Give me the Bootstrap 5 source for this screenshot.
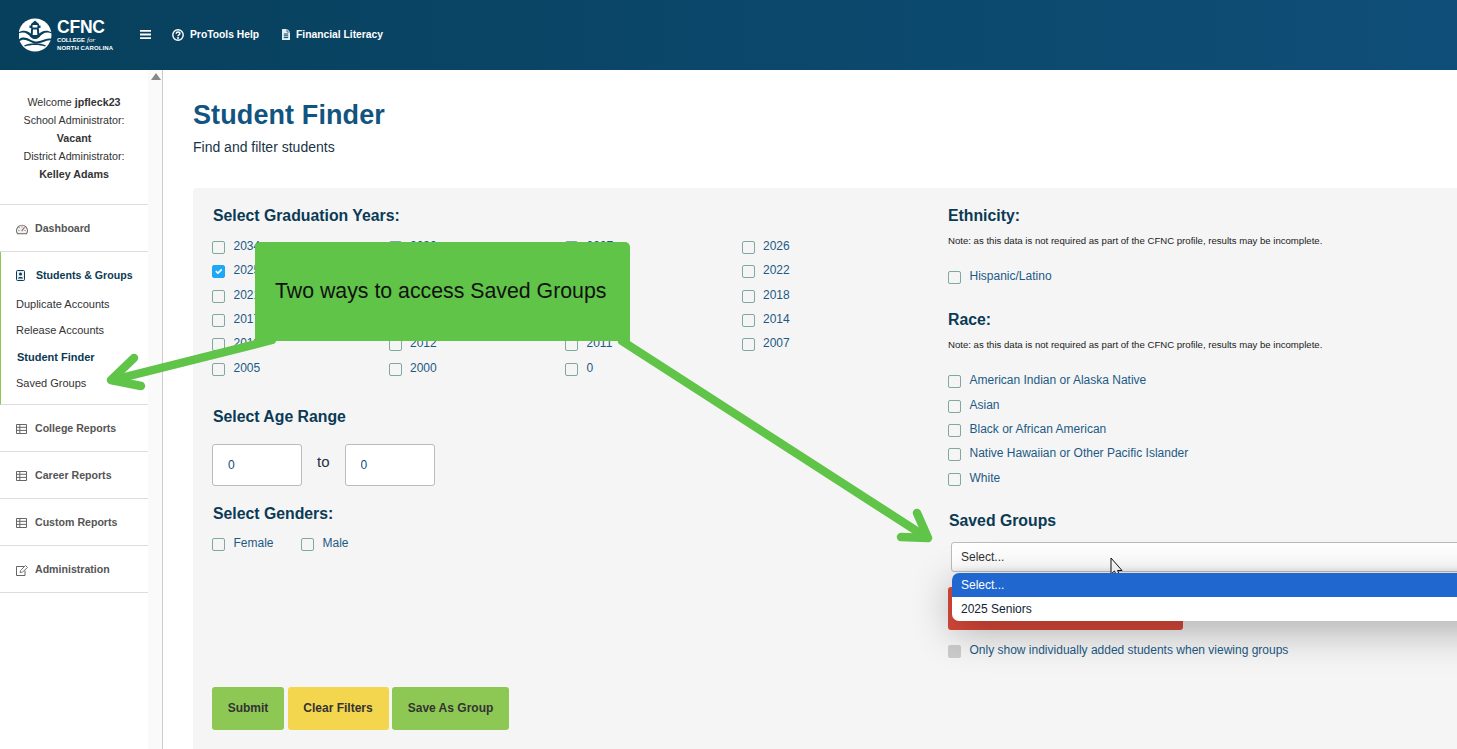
<!DOCTYPE html>
<html lang="en">
<head>
<meta charset="utf-8">
<title>Student Finder</title>
<link href="https://cdn.jsdelivr.net/npm/bootstrap@5.3.0/dist/css/bootstrap.min.css" rel="stylesheet">
<style>
html,body{height:749px;overflow:hidden}
body{font-family:"Liberation Sans",Arial,sans-serif;color:#222;background:#fff;width:1457px;position:relative}
.topbar{height:70px;background:linear-gradient(90deg,#07405c,#0f4e78);padding:0 0 1px 19px}
.brand{width:121px;margin-right:0;margin-top:1px}
.menu-btn{width:11px;margin-right:21px;line-height:0}
.top-link{color:#fff;font-size:10.3px;font-weight:700;text-decoration:none;gap:6px;margin-right:23px;line-height:14px}
.shell{height:679px}
.sidenav{width:163px;border-right:1px solid #ccc;flex:none}
.side-inner{width:148px;flex:none}
.side-scroll{width:14px;background:#fafafa;flex:none;padding:3px 0 0 3px}
.scroll-up{width:0;height:0;border-left:5px solid transparent;border-right:5px solid transparent;border-bottom:7px solid #888}
.welcome{font-size:10.7px;line-height:18px;text-align:center;color:#333;padding:23px 0 0;height:135px;border-bottom:1px solid #ddd}
.welcome b{color:#333}
.side-row{height:47px;border-bottom:1px solid #ddd;padding:2px 0 0 16px;font-size:10.6px;font-weight:700;color:#555;gap:7px;text-decoration:none}
.gap-table{gap:8px}
.side-group{height:153px;border-bottom:1px solid #ddd;border-left:1px solid #8ec854;padding-left:15px}
.side-head{height:45px;font-size:10.6px;font-weight:700;color:#0b3a55;gap:11px;padding-top:2px}
.side-sub{display:block;font-size:11px;color:#333;text-decoration:none;line-height:14px;margin-bottom:12.3px}
.side-sub.here{font-weight:700;color:#0b3a55;padding-left:1px}
.content{flex:1;min-width:0;padding:0 0 0 30px;overflow:hidden}
.page-title{font-size:27px;font-weight:700;color:#125480;line-height:32px;margin:29px 0 0;letter-spacing:.1px}
.page-sub{font-size:14px;color:#1a3446;line-height:18px;margin:7px 0 0}
.panel{background:#f5f5f5;border-radius:4px 0 0 0;margin-top:32px;padding:18px 0 0 19px;width:1400px;height:600px;display:grid;grid-template-columns:736px 1fr}
.sect{font-size:15.8px;font-weight:700;line-height:20px;color:#0b3a55;margin:0}
.sect-l{margin-left:1px}
.sect-age{margin-top:25.800px}
.sect-gen{margin-top:18px}
.year-grid{display:grid;grid-template-columns:repeat(4,176.5px);grid-auto-rows:24.4px;margin-top:8.700px}
.chk{display:flex;align-items:center;gap:8.5px;font-size:12px;color:#1c5a85;margin:0;height:24.4px;line-height:14px}
.chk span{position:relative;top:-1px}
.chk .form-check-input{width:13px;height:13px;margin:1px 0 0 0;border:1px solid #7fa8a0;border-radius:2px;background-color:#f5f5f5;flex:none}
.chk .form-check-input:checked{background-color:#1fa8f5;border-color:#1fa8f5}
.chk .form-check-input:disabled{background-color:#ccc;border-color:#ccc;opacity:1}
.age-row{display:flex;align-items:center;margin-top:17px;gap:15px}
.age-box{width:90px;height:42px;border:1px solid #bbb;border-radius:3px;font-size:12px;color:#144a6e;padding:2px 15px}
.age-to{font-size:15px;color:#1a3446;position:relative;top:-3px}
.gender-row{display:flex;gap:27.5px;margin-top:8px}
.btn-row{display:flex;gap:3.5px;margin-top:131px}
.act-btn{height:43px;font-size:12px;font-weight:700;color:#333;border:0;border-radius:3px;padding:0 0 2px}
.act-green{background:#8ec854}
.act-yellow{background:#f4d64e}
.w-submit{width:72px}
.w-clear{width:101px}
.w-save{width:117px}
.note{font-size:9.6px;line-height:14px;color:#222;margin:8px 0 0}
.note+.chk{margin-top:17px}
.gap-race{margin-top:20.6px}
.gap-saved{margin-top:20px;padding-left:1px}
.select-wrap{position:relative;margin:11px 0 0 3px;width:700px}
.pick{height:30px;font-size:12px;color:#333;padding:0 0 0 9px;border:1px solid #bbb;border-radius:3px;background-color:#fff;box-shadow:inset 0 -6px 6px -6px rgba(0,0,0,.12)}
.pick-menu{top:31px;left:1px;width:100%;padding:0;border:0;border-radius:7px;font-size:12px;margin:0;overflow:hidden;box-shadow:0 10px 40px rgba(0,0,0,.3);min-width:0}
.pick-menu .dropdown-item{height:24px;line-height:24px;padding:0 9px;color:#123}
.pick-menu .dropdown-item.active{background:#2068cf;color:#fff}
.red-block{width:235px;height:43px;background:#dc4a3a;border-radius:3px;margin-top:15px}
.red-block+.chk{margin-top:9px}
.marks{position:absolute;left:0;top:0;width:1457px;height:749px;pointer-events:none}
.callout{position:absolute;left:255px;top:242px;width:375px;height:99px;background:#5fc448;border-radius:5px 5px 0 0;font-size:21.3px;line-height:99px;color:#111;padding-left:20px;white-space:nowrap}
</style>
</head>
<body>
<header class="topbar d-flex align-items-center">
  <div class="brand">
    <svg width="96" height="34" viewBox="0 0 96 34" role="img" aria-label="CFNC College for North Carolina">
      <circle cx="16" cy="17" r="16.500" fill="#fff"/>
      <path d="M-1 14.500C5 11 9 13 13 16.500V19H19V16.500C23 13 27 11 33 14.500V15.500C27 13 23 15.500 20 19.500C17 21.500 15 21.500 12 19.500C9 15.500 5 13 -1 15.500Z" fill="#07405c"/>
      <path d="M-.5 21.500C6 16.500 11 22.500 16 23.500C22 24.500 27 19 32.500 21L32.500 22.500C27 21.500 22 26.500 16 25.500C10 24.500 6 19 0 23.500Z" fill="#07405c"/>
      <path d="M5 27.500C11 24.500 21 24.500 27 27.500L26 28.500C21 26.500 11 26.500 6 28.500Z" fill="#07405c"/>
      <path d="M12 6L16 2.500L20 6V7.500H21.500V10H19.800L20.500 19H11.500L12.200 10H10.500V7.500H12Z" fill="#07405c"/>
      <path d="M13.600 7h4.800v2.500h-4.800zM14 11.500h4L18.300 17H13.700Z" fill="#fff"/>
      <text x="38" y="15.200" font-family="Liberation Sans" font-size="17.500" font-weight="700" fill="#fff" textLength="48">CFNC</text>
      <text x="38" y="23.700" font-family="Liberation Sans" font-size="6" font-weight="700" fill="#fff" textLength="28">COLLEGE</text>
      <text x="68" y="23.700" font-family="Liberation Serif" font-size="7" font-style="italic" fill="#fff">for</text>
      <text x="38" y="31.500" font-family="Liberation Sans" font-size="6" font-weight="700" fill="#fff" textLength="56">NORTH CAROLINA</text>
    </svg>
  </div>
  <div class="menu-btn"><svg width="11" height="9" viewBox="0 0 11 9"><path d="M0 0h11v1.800H0zM0 3.600h11v1.800H0zM0 7.200h11V9H0z" fill="#fff"/></svg></div>
  <a class="top-link d-flex align-items-center" href="#">
    <svg width="12" height="12" viewBox="0 0 12 12"><circle cx="6" cy="6" r="5.200" fill="none" stroke="#fff" stroke-width="1.400"/><path d="M4.200 4.700C4.300 3.600 5 3.100 6 3.100c1.100 0 1.900.6 1.900 1.500 0 1.400-1.900 1.300-1.900 2.600" fill="none" stroke="#fff" stroke-width="1.500"/><circle cx="6" cy="9" r="1" fill="#fff"/></svg>
    ProTools Help</a>
  <a class="top-link d-flex align-items-center" href="#">
    <svg width="8" height="11" viewBox="0 0 8 11"><path d="M0 .5A.5.5 0 0 1 .5 0H5.200L8 2.800V10.500a.5.500 0 0 1-.5.500H.5a.5.500 0 0 1-.5-.5Z" fill="#e6eef2"/><path d="M5 0V3H8" fill="none" stroke="#0a4565" stroke-width=".7"/><path d="M1.800 5h4.400M1.800 6.800h4.400M1.800 8.600h4.400" stroke="#0a4565" stroke-width="1"/></svg>
    Financial Literacy</a>
</header>
<div class="shell d-flex">
  <aside class="sidenav d-flex">
    <nav class="side-inner">
      <div class="welcome">Welcome <b>jpfleck23</b><br>School Administrator:<br><b>Vacant</b><br>District Administrator:<br><b>Kelley Adams</b></div>
      <a class="side-row d-flex align-items-center" href="#">
        <svg width="12" height="11" viewBox="0 0 12 11"><path d="M1.600 9.800A5.400 5.400 0 1 1 10.400 9.800Z" fill="#f2f2f2" stroke="#666" stroke-width="1.100"/><path d="M5.600 7.200L8.500 3.400" stroke="#a65" stroke-width="1.100"/><path d="M2.400 6.500h1M8.600 6.500h1M6 2.400v1M3.400 3.500l.7.700" stroke="#666" stroke-width=".9"/></svg>
        Dashboard</a>
      <div class="side-group">
        <div class="side-head d-flex align-items-center">
          <svg width="9" height="11" viewBox="0 0 9 11"><rect x=".5" y=".5" width="8" height="10" rx="1" fill="#e8eef2" stroke="#0b3a55"/><circle cx="4.500" cy="4" r="1.500" fill="#0b3a55"/><path d="M2 8.500C2 6.500 7 6.500 7 8.500Z" fill="#0b3a55"/></svg>
          Students &amp; Groups</div>
        <a class="side-sub" href="#">Duplicate Accounts</a>
        <a class="side-sub" href="#">Release Accounts</a>
        <a class="side-sub here" href="#">Student Finder</a>
        <a class="side-sub" href="#">Saved Groups</a>
      </div>
      <a class="side-row gap-table d-flex align-items-center" href="#">
        <svg width="11" height="10" viewBox="0 0 11 10"><path d="M.5.500h10v9H.5zM.5 3.300h10M.5 6.400h10M3.800.500v9" fill="none" stroke="#666" stroke-width="1"/></svg>
        College Reports</a>
      <a class="side-row gap-table d-flex align-items-center" href="#">
        <svg width="11" height="10" viewBox="0 0 11 10"><path d="M.5.500h10v9H.5zM.5 3.300h10M.5 6.400h10M3.800.500v9" fill="none" stroke="#666" stroke-width="1"/></svg>
        Career Reports</a>
      <a class="side-row gap-table d-flex align-items-center" href="#">
        <svg width="11" height="10" viewBox="0 0 11 10"><path d="M.5.500h10v9H.5zM.5 3.300h10M.5 6.400h10M3.800.500v9" fill="none" stroke="#666" stroke-width="1"/></svg>
        Custom Reports</a>
      <a class="side-row d-flex align-items-center" href="#">
        <svg width="12" height="11" viewBox="0 0 12 11"><path d="M8 1.500H.5v9h8.500V5.500" fill="none" stroke="#666"/><path d="M4 7.500L4.500 5.500L9.500 .5L11.500 2.500L6.500 7Z" fill="none" stroke="#666" stroke-width=".9"/></svg>
        Administration</a>
    </nav>
    <div class="side-scroll"><div class="scroll-up"></div></div>
  </aside>
  <main class="content">
    <h1 class="page-title">Student Finder</h1>
    <p class="page-sub">Find and filter students</p>
    <section class="panel">
      <div>
        <h2 class="sect sect-l">Select Graduation Years:</h2>
        <div class="year-grid">
          <label class="chk"><input class="form-check-input" type="checkbox"><span>2034</span></label>
          <label class="chk"><input class="form-check-input" type="checkbox"><span>2030</span></label>
          <label class="chk"><input class="form-check-input" type="checkbox"><span>2027</span></label>
          <label class="chk"><input class="form-check-input" type="checkbox"><span>2026</span></label>
          <label class="chk"><input class="form-check-input" type="checkbox" checked><span>2025</span></label>
          <label class="chk"><input class="form-check-input" type="checkbox"><span>2024</span></label>
          <label class="chk"><input class="form-check-input" type="checkbox"><span>2023</span></label>
          <label class="chk"><input class="form-check-input" type="checkbox"><span>2022</span></label>
          <label class="chk"><input class="form-check-input" type="checkbox"><span>2021</span></label>
          <label class="chk"><input class="form-check-input" type="checkbox"><span>2020</span></label>
          <label class="chk"><input class="form-check-input" type="checkbox"><span>2019</span></label>
          <label class="chk"><input class="form-check-input" type="checkbox"><span>2018</span></label>
          <label class="chk"><input class="form-check-input" type="checkbox"><span>2017</span></label>
          <label class="chk"><input class="form-check-input" type="checkbox"><span>2016</span></label>
          <label class="chk"><input class="form-check-input" type="checkbox"><span>2015</span></label>
          <label class="chk"><input class="form-check-input" type="checkbox"><span>2014</span></label>
          <label class="chk"><input class="form-check-input" type="checkbox"><span>2013</span></label>
          <label class="chk"><input class="form-check-input" type="checkbox"><span>2012</span></label>
          <label class="chk"><input class="form-check-input" type="checkbox"><span>2011</span></label>
          <label class="chk"><input class="form-check-input" type="checkbox"><span>2007</span></label>
          <label class="chk"><input class="form-check-input" type="checkbox"><span>2005</span></label>
          <label class="chk"><input class="form-check-input" type="checkbox"><span>2000</span></label>
          <label class="chk"><input class="form-check-input" type="checkbox"><span>0</span></label>
        </div>
        <h2 class="sect sect-l sect-age">Select Age Range</h2>
        <div class="age-row">
          <input class="form-control age-box" type="text" value="0" aria-label="Minimum age">
          <span class="age-to">to</span>
          <input class="form-control age-box" type="text" value="0" aria-label="Maximum age">
        </div>
        <h2 class="sect sect-l sect-gen">Select Genders:</h2>
        <div class="gender-row">
          <label class="chk"><input class="form-check-input" type="checkbox"><span>Female</span></label>
          <label class="chk"><input class="form-check-input" type="checkbox"><span>Male</span></label>
        </div>
        <div class="btn-row">
          <button class="btn act-btn act-green w-submit" type="button">Submit</button>
          <button class="btn act-btn act-yellow w-clear" type="button">Clear Filters</button>
          <button class="btn act-btn act-green w-save" type="button">Save As Group</button>
        </div>
      </div>
      <div>
        <h2 class="sect">Ethnicity:</h2>
        <p class="note">Note: as this data is not required as part of the CFNC profile, results may be incomplete.</p>
        <label class="chk"><input class="form-check-input" type="checkbox"><span>Hispanic/Latino</span></label>
        <h2 class="sect gap-race">Race:</h2>
        <p class="note">Note: as this data is not required as part of the CFNC profile, results may be incomplete.</p>
        <label class="chk"><input class="form-check-input" type="checkbox"><span>American Indian or Alaska Native</span></label>
        <label class="chk"><input class="form-check-input" type="checkbox"><span>Asian</span></label>
        <label class="chk"><input class="form-check-input" type="checkbox"><span>Black or African American</span></label>
        <label class="chk"><input class="form-check-input" type="checkbox"><span>Native Hawaiian or Other Pacific Islander</span></label>
        <label class="chk"><input class="form-check-input" type="checkbox"><span>White</span></label>
        <h2 class="sect gap-saved">Saved Groups</h2>
        <div class="select-wrap">
          <select class="form-select pick" aria-label="Saved Groups"><option>Select...</option><option>2025 Seniors</option></select>
          <div class="dropdown-menu show pick-menu">
            <a class="dropdown-item active" href="#">Select...</a>
            <a class="dropdown-item" href="#">2025 Seniors</a>
          </div>
        </div>
        <div class="red-block"></div>
        <label class="chk"><input class="form-check-input" type="checkbox" disabled><span>Only show individually added students when viewing groups</span></label>
      </div>
    </section>
  </main>
</div>
<div class="callout">Two ways to access Saved Groups</div>
<svg class="marks" viewBox="0 0 1457 749">
  <g fill="none" stroke="#5fc448" stroke-width="8.500" stroke-linecap="round" stroke-linejoin="round">
    <path d="M272 340L113 380"/>
    <path d="M134 358L111 380L141 386"/>
    <path d="M622 341L926 537"/>
    <path d="M917 513L928 538L901 537"/>
  </g>
  <path d="M1111 558V574L1114.500 571L1117 577L1120 575.800L1117.500 570.500H1122Z" fill="#fff" stroke="#111" stroke-width="1"/>
</svg>
</body>
</html>
